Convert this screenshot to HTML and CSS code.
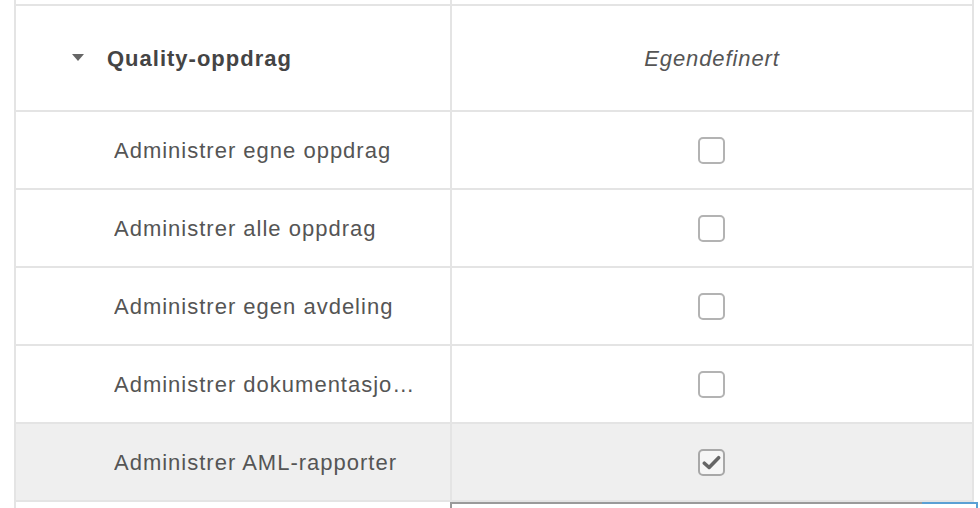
FILE: index.html
```html
<!DOCTYPE html>
<html lang="no">
<head>
<meta charset="utf-8">
<title>Rettigheter</title>
<link rel="stylesheet" href="styles.css">
</head>
<body>
<div class="wrap">
  <div class="table">
    <div class="row top"><div class="cell name"></div><div class="cell val"></div></div>
    <div class="row head">
      <div class="cell name"><span class="caret"></span><span class="group">Quality-oppdrag</span></div>
      <div class="cell val"><span class="custom">Egendefinert</span></div>
    </div>
    <div class="row item">
      <div class="cell name"><span class="label">Administrer egne oppdrag</span></div>
      <div class="cell val"><span class="box"></span></div>
    </div>
    <div class="row item">
      <div class="cell name"><span class="label">Administrer alle oppdrag</span></div>
      <div class="cell val"><span class="box"></span></div>
    </div>
    <div class="row item">
      <div class="cell name"><span class="label">Administrer egen avdeling</span></div>
      <div class="cell val"><span class="box"></span></div>
    </div>
    <div class="row item">
      <div class="cell name"><span class="label">Administrer dokumentasjonskrav</span></div>
      <div class="cell val"><span class="box"></span></div>
    </div>
    <div class="row item active">
      <div class="cell name"><span class="label">Administrer AML-rapporter</span></div>
      <div class="cell val"><span class="box checked"><svg viewBox="0 0 16 16" width="19" height="19"><path d="M2 8.6 L6 12.2 L14 4" fill="none" stroke="#666" stroke-width="3" stroke-linecap="round" stroke-linejoin="round"/></svg></span></div>
    </div>
  </div>
  <div class="below">
    <div class="below-top"><span class="seg-gray"></span><span class="seg-blue"></span></div>
  </div>
</div>
</body>
</html>
```
FILE: styles.css
```css
html, body {
  margin: 0;
  padding: 0;
  background: #fff;
  overflow: hidden;
}
body {
  width: 980px;
  height: 508px;
  font-family: "Liberation Sans", Arial, Helvetica, sans-serif;
  color: #555;
}
.wrap {
  margin-left: 14px;
  height: 508px;
  border-left: 2px solid #e4e4e4;
}
.table {
  width: 956px;
  border-right: 2px solid #e4e4e4;
}
.row {
  display: flex;
  border-bottom: 2px solid #e4e4e4;
}
.row.top { height: 4px; }
.row.head { height: 104px; }
.row.item { height: 76px; }
.row.active { background: #efefef; }
.cell {
  display: flex;
  align-items: center;
}
.cell.name {
  box-sizing: border-box;
  width: 436px;
  border-right: 2px solid #e4e4e4;
}
.cell.val {
  flex: 1;
  justify-content: center;
}
.caret {
  width: 0;
  height: 0;
  border-left: 6px solid transparent;
  border-right: 6px solid transparent;
  border-top: 7px solid #666;
  margin-left: 56px;
  margin-right: 23px;
  margin-top: -2px;
}
.group {
  font-size: 22px;
  letter-spacing: 1px;
  font-weight: bold;
  color: #444;
  padding-top: 2px;
}
.custom {
  font-size: 22px;
  letter-spacing: 0.9px;
  font-style: italic;
  color: #555;
  padding-top: 2px;
}
.label {
  font-size: 22px;
  letter-spacing: 1px;
  color: #555;
  margin-left: 98px;
  max-width: 306px;
  white-space: nowrap;
  overflow: hidden;
  text-overflow: ellipsis;
  padding-top: 2px;
}
.box {
  width: 23px;
  height: 23px;
  border: 2px solid #b3b3b3;
  border-radius: 5px;
  background: #fff;
  display: flex;
  align-items: center;
  justify-content: center;
  margin-left: -1px;
}
.box.checked {
  border-color: #a8a8a8;
  background: #f6f6f6;
}
.below {
  margin-left: 434px;
  width: 524px;
  height: 10px;
  border-left: 2px solid #999;
  border-right: 2px solid #5aa0d4;
}
.below-top {
  display: flex;
  height: 2px;
  margin-left: -2px;
  margin-right: -2px;
}
.seg-gray {
  width: 472px;
  background: #9a9a9a;
}
.seg-blue {
  flex: 1;
  background: #5aa0d4;
}
```
